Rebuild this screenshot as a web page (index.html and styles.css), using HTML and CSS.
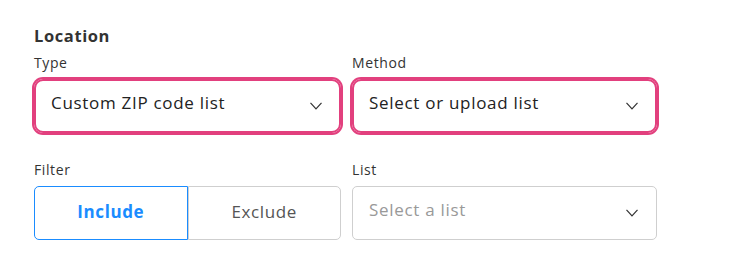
FILE: index.html
```html
<!DOCTYPE html>
<html lang="en">
<head>
    <meta charset="UTF-8">
    <meta name="viewport" content="width=device-width, initial-scale=1.0">
    <title>Location</title>
    <link rel="stylesheet" href="styles.css">
</head>
<body>
    <div class="container">
        <h3>Location</h3>
        <div class="fields">
            <div class="field">
                <label>Type</label>
                <div class="select focused">
                    <span>Custom ZIP code list</span>
                    <svg class="chevron" width="12" height="8" viewBox="0 0 12 8"><path d="M0.5 0.8 L6 6.8 L11.5 0.8" fill="none" stroke="#333" stroke-width="1.2"/></svg>
                </div>
            </div>
            <div class="field">
                <label>Method</label>
                <div class="select focused">
                    <span>Select or upload list</span>
                    <svg class="chevron" width="12" height="8" viewBox="0 0 12 8"><path d="M0.5 0.8 L6 6.8 L11.5 0.8" fill="none" stroke="#333" stroke-width="1.2"/></svg>
                </div>
            </div>
            <div class="field">
                <label>Filter</label>
                <div class="toggle">
                    <button class="active">Include</button>
                    <button>Exclude</button>
                </div>
            </div>
            <div class="field">
                <label>List</label>
                <div class="select">
                    <span class="placeholder">Select a list</span>
                    <svg class="chevron" width="12" height="8" viewBox="0 0 12 8"><path d="M0.5 0.8 L6 6.8 L11.5 0.8" fill="none" stroke="#333" stroke-width="1.2"/></svg>
                </div>
            </div>
        </div>
    </div>
</body>
</html>
```

FILE: styles.css
```css
body {
    font-family: "Open Sans", Lato, sans-serif;
    margin: 0;
    background-color: #ffffff;
    color: #222;
}
.container {
    padding: 26px 34px;
}
h3 {
    font-size: 16.5px;
    font-weight: bold;
    color: #333;
    margin: 0 0 8px 0;
    line-height: 20px;
    letter-spacing: 0.6px;
}
.fields {
    display: grid;
    grid-template-columns: 307px 305px;
    column-gap: 11px;
    row-gap: 28px;
}
.field label {
    display: block;
    font-size: 14px;
    line-height: 18px;
    color: #333;
    margin-bottom: 7px;
    letter-spacing: 0.6px;
}
.select {
    box-sizing: border-box;
    height: 54px;
    border: 1px solid #cfcfcf;
    border-radius: 5px;
    display: flex;
    align-items: center;
    justify-content: space-between;
    padding: 0 18px 7px 16px;
    font-size: 17px;
    letter-spacing: 0.7px;
    color: #222;
}
.select.focused {
    border: 2px solid #e2407e;
    box-shadow: 0 0 0 2px #e2407e;
    border-radius: 9px;
    padding-left: 15px;
    padding-right: 17px;
}
.placeholder {
    color: #999;
}
.chevron {
    margin-top: 7px;
}
.toggle {
    display: flex;
    height: 54px;
}
.toggle button {
    flex: 1;
    font-family: inherit;
    font-size: 17px;
    letter-spacing: 0.6px;
    background: white;
    border: 1px solid #cfcfcf;
    color: #555;
    cursor: pointer;
    padding: 0 0 3px 0;
}
.toggle button:first-child {
    border-radius: 5px 0 0 5px;
    border-right: none;
}
.toggle button:last-child {
    border-radius: 0 5px 5px 0;
}
.toggle button.active {
    border-color: #1a8cff;
    border-right: 1px solid #1a8cff;
    color: #1a8cff;
    font-weight: bold;
}
```
